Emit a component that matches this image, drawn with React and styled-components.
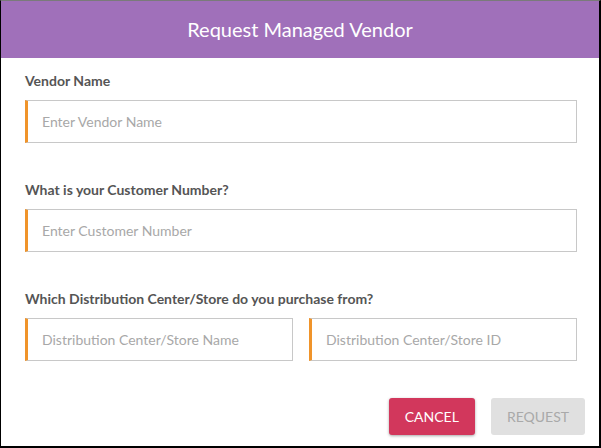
import React, { useState } from "react";
import styled, { createGlobalStyle } from "styled-components";

const GlobalStyle = createGlobalStyle`
  html, body {
    margin: 0;
    padding: 0;
    background: #ffffff;
  }
  body {
    font-family: Lato, "Open Sans", sans-serif;
  }
`;

const Frame = styled.div`
  width: 601px;
  height: 448px;
  box-sizing: border-box;
  border-top: 1px solid #7a7a7a;
  border-left: 1px solid #000;
  border-right: 2px solid #000;
  border-bottom: 2px solid #000;
  background: #fff;
  display: flex;
  flex-direction: column;
`;

const Header = styled.div`
  height: 57px;
  background: #a070ba;
  display: flex;
  align-items: center;
  justify-content: center;
  flex-shrink: 0;
`;

const Title = styled.h1`
  margin: 0;
  font-family: Lato, sans-serif;
  font-size: 20px;
  font-weight: 400;
  color: #ffffff;
  padding-bottom: 2px;
`;

const Form = styled.form`
  display: flex;
  flex-direction: column;
  padding: 14px 22px 0 24px;
`;

const Group = styled.div`
  display: flex;
  flex-direction: column;
  margin-top: ${(p) => (p.first ? "0" : "38px")};
`;

const Label = styled.label`
  font-family: Lato, sans-serif;
  font-size: 14px;
  line-height: 17px;
  font-weight: 700;
  color: #555555;
  margin-bottom: 11px;
`;

const Row = styled.div`
  display: grid;
  grid-template-columns: 1fr 1fr;
  column-gap: 16px;
`;

const Input = styled.input`
  box-sizing: border-box;
  width: 100%;
  height: 43px;
  border: 1px solid #c8c8c8;
  border-left: 3px solid #f0942a;
  border-radius: 0;
  padding: 0 0 0 14px;
  font-family: Lato, sans-serif;
  font-size: 14px;
  color: #444;
  outline: none;
  background: #fff;

  &::placeholder {
    color: #a8a8a8;
  }
`;

const Actions = styled.div`
  display: flex;
  justify-content: flex-end;
  gap: 16px;
  padding: 37px 14px 0 0;
`;

const Button = styled.button`
  height: 37px;
  border: none;
  border-radius: 3px;
  font-family: Lato, sans-serif;
  font-size: 14px;
  text-transform: uppercase;
  cursor: pointer;
  padding: 0 16px;
  background: ${(p) => (p.primary ? "#d2375c" : "#e0e0e0")};
  color: ${(p) => (p.primary ? "#ffffff" : "#a9a9a9")};
  box-shadow: ${(p) => (p.primary ? "0 1px 3px rgba(0,0,0,0.35)" : "none")};
  &:disabled {
    cursor: not-allowed;
  }
`;

const App = () => {
  const [values, setValues] = useState({
    vendor: "",
    customer: "",
    storeName: "",
    storeId: "",
  });
  const { vendor, customer, storeName, storeId } = values;

  const handleChange = (name) => (event) => {
    setValues({ ...values, [name]: event.target.value });
  };

  const ready = vendor && customer && storeName && storeId;

  return (
    <>
      <GlobalStyle />
      <Frame>
        <Header>
          <Title>Request Managed Vendor</Title>
        </Header>
        <Form onSubmit={(e) => e.preventDefault()}>
          <Group first>
            <Label>Vendor Name</Label>
            <Input
              placeholder="Enter Vendor Name"
              value={vendor}
              onChange={handleChange("vendor")}
            />
          </Group>
          <Group>
            <Label>What is your Customer Number?</Label>
            <Input
              placeholder="Enter Customer Number"
              value={customer}
              onChange={handleChange("customer")}
            />
          </Group>
          <Group>
            <Label>Which Distribution Center/Store do you purchase from?</Label>
            <Row>
              <Input
                placeholder="Distribution Center/Store Name"
                value={storeName}
                onChange={handleChange("storeName")}
              />
              <Input
                placeholder="Distribution Center/Store ID"
                value={storeId}
                onChange={handleChange("storeId")}
              />
            </Row>
          </Group>
        </Form>
        <Actions>
          <Button primary>Cancel</Button>
          <Button disabled={!ready}>Request</Button>
        </Actions>
      </Frame>
    </>
  );
};

export default App;
